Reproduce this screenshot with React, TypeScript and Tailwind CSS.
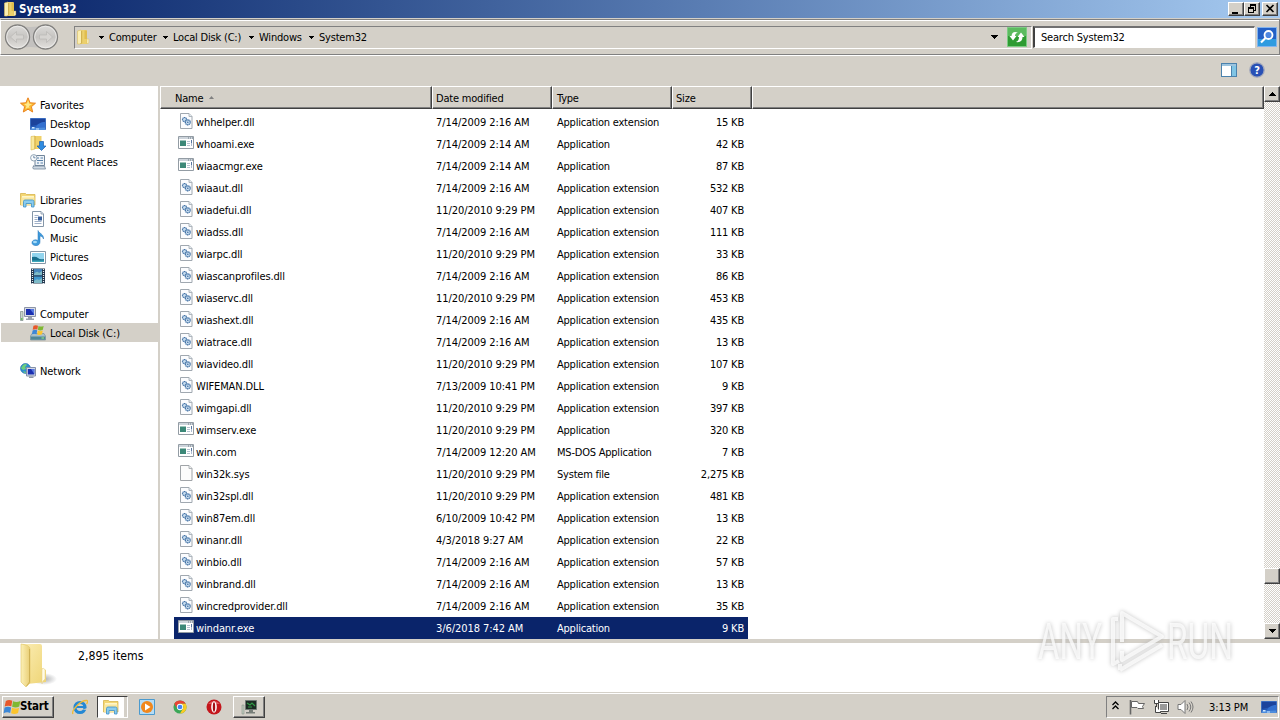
import type { ReactNode } from "react";

type IconProps = { size?: number; children: ReactNode };

const Icon = ({ size = 16, children }: IconProps) => (
  <svg width={size} height={size} viewBox="0 0 16 16" className="block shrink-0">
    {children}
  </svg>
);

const FolderIcon = () => (
  <Icon>
    <path d="M5.5 1h6v9l2 .5V14l-1.500 1H5l1-1.500z" fill="#ecd06c" />
    <path d="M2.500 2 6 1l1 1v11.500L5.500 15h-3z" fill="#fbeeb0" stroke="#dcc060" strokeWidth=".6" />
    <path d="M6.500 2v12l-1 1" fill="none" stroke="#c9a63f" strokeWidth=".8" />
    <path d="M9.500 1.500h2.500V10H9.500z" fill="#e0bd4d" />
    <path d="M12 10h1.800v4l-1.800.8z" fill="#fdf5cf" stroke="#d9b94c" strokeWidth=".4" />
  </Icon>
);

const LargeFolderIcon = () => (
  <svg width="44" height="46" viewBox="0 0 44 46" className="shrink-0">
    <defs>
      <linearGradient id="flap">
        <stop stopColor="#fcf0b6" />
        <stop offset="1" stopColor="#e9ce75" />
      </linearGradient>
      <linearGradient id="back" x2="1" y2="1">
        <stop stopColor="#fbedb4" />
        <stop offset="1" stopColor="#eed474" />
      </linearGradient>
      <radialGradient id="shade">
        <stop stopColor="#8b8d90" stopOpacity=".7" />
        <stop offset="1" stopColor="#8b8d90" stopOpacity="0" />
      </radialGradient>
    </defs>
    <ellipse cx="29" cy="36" rx="13" ry="6" fill="url(#shade)" />
    <path d="M7 1h18q2 0 2 2v22l4 2v12l-19 2z" fill="url(#back)" />
    <path d="M27 26q2-2 3 1v9q-3 2-3 5z" fill="#fffbe6" stroke="#e5cf86" strokeWidth=".5" />
    <path d="M6 1q9 1 9 5v34l-4 4-5-5z" fill="url(#flap)" stroke="#dfc467" strokeWidth=".6" />
    <path d="M14.500 6v33l-3 4" fill="none" stroke="#c9aa4d" strokeWidth=".8" />
  </svg>
);

const StarIcon = () => (
  <Icon>
    <path
      d="m8 .8 2.100 5 5.400.4-4.100 3.500 1.300 5.300L8 12.200 3.300 15l1.300-5.300L.5 6.200l5.400-.4z"
      fill="#fbb92f"
      stroke="#ea8420"
    />
    <path d="m8 3 1.300 3.700 3 .3L9 9l.5 2L8 10.500 5.500 12 6.500 9 4 7l3-.4z" fill="#ffe98c" />
  </Icon>
);

const DesktopIcon = () => (
  <Icon>
    <path d="M.5 2.500h15v11H.5z" fill="#2458b5" stroke="#3a6cc0" />
    <path d="M1 3h14v4L1 10z" fill="#1c439c" />
    <path d="M6 11c1-3 5-5 9-5v6z" fill="#3370d0" />
    <path d="M1 11.500h14V14H1z" fill="#4d8ddd" />
    <path d="M2 11h2.500v1.500H2zM6 12.500h3v1H6z" fill="#cfe8ff" />
  </Icon>
);

const DownloadsIcon = () => (
  <Icon>
    <path d="M1 1.500 5 1v13l-4 1z" fill="#f9e9a0" stroke="#d9b94c" strokeWidth=".6" />
    <path d="M5 1h6.500v13h-7z" fill="#f0d16a" />
    <path d="M5 1v13" stroke="#c79f35" strokeWidth=".7" />
    <path d="M9.500 6.500h4V11H16l-4.500 4.500L7 11h2.500z" fill="#2f8be0" stroke="#1c5fae" strokeWidth=".7" />
  </Icon>
);

const RecentIcon = () => (
  <Icon>
    <path d="M5 1.500h9.500v10H5z" fill="#eef3f8" stroke="#71859a" />
    <path d="M7 4h2M10.500 4h2.500M7 6.500h6M7 9h2M10.500 9h2.500" stroke="#5881aa" />
    <path d="M3 12h11.500l1 3H3.500q-1.500-1 0-3z" fill="#cfd9e3" stroke="#71859a" strokeWidth=".8" />
    <circle cx="3.800" cy="3.800" r="3.200" fill="#fafcfe" stroke="#91a3b4" />
    <path d="M3.800 1.800v2h1.700" fill="none" stroke="#4d6f92" strokeWidth=".8" />
  </Icon>
);

const LibrariesIcon = () => (
  <Icon>
    <path d="M.5 1.500h5l1 1h8.500V13H.5z" fill="#f4d775" stroke="#d2ad3f" strokeWidth=".7" />
    <path d="M2 4h12v3H2z" fill="#fff6c9" />
    <path d="M1.500 5.500h13L14 13H1z" fill="#f9e7a0" />
    <path
      d="M3.500 15V9.500Q3.500 8 5 8h7.500Q14 8 14 9.500V15h-2.500v-3.500H6V15z"
      fill="#8accef"
      stroke="#3d91c6"
      strokeWidth=".8"
    />
  </Icon>
);

const DocumentsIcon = () => (
  <Icon>
    <path d="M2.500.5H11l2.500 2.500v12.500h-11z" fill="#fff" stroke="#8596a8" />
    <path d="M11 .5V3h2.500" fill="#dfe7f0" stroke="#8596a8" strokeWidth=".8" />
    <path d="M4.500 4.500h4M4.500 6.500h3M4.500 8.500h3M4.500 10.500h7M4.500 12.500h7" stroke="#9fb0c8" />
    <path d="M8 5.500h4v4H8z" fill="#375f9d" />
  </Icon>
);

const MusicIcon = () => (
  <Icon>
    <path
      d="M8 .5c1 3 6 3.500 5.500 8.500-.6-2-2-3-3.500-3v6c0 5-8.500 4.500-8 .5.3-2.500 3.500-3.500 6-2z"
      fill="#3f9bdc"
      stroke="#2474b8"
      strokeWidth=".5"
    />
    <ellipse cx="5" cy="12" rx="2" ry="1.200" fill="#a6dbf8" />
  </Icon>
);

const PicturesIcon = () => (
  <Icon>
    <path d="M.5 2.500h15v12H.5z" fill="#fff" stroke="#8798a8" />
    <path d="M2 4h12v9H2z" fill="#92d4ee" />
    <path d="M2 8q4-1 6 1t6 1v3H2z" fill="#19708e" />
    <path d="M2 11.500h12V13H2z" fill="#3fa8bb" />
  </Icon>
);

const VideosIcon = () => (
  <Icon>
    <path d="M1 .5h14v15H1z" fill="#22364c" />
    <path d="M4 1h8v6.500H4z" fill="#4686bd" />
    <path d="M4 8.500h8V15H4z" fill="#3e97cf" />
    <path d="M4 6q3-4 5-1l3-2v4H4zM4 13q3-3 5-1l3-2v5H4z" fill="#7ebbc8" />
    <path d="M2.500 1v15M13.500 1v15" stroke="#e7edf3" strokeWidth="1.200" strokeDasharray="1 1" />
  </Icon>
);

const ComputerIcon = () => (
  <Icon>
    <path d="M.5 5.500H3v9H.5z" fill="#cbd6cc" stroke="#7c8d88" strokeWidth=".7" />
    <path d="M1 12h1.500v2H1z" fill="#6bc15f" />
    <path d="M4.500 1.500h11v9h-11z" fill="#d6dbe6" stroke="#8c94a6" />
    <path d="M6 3h8v6H6z" fill="#1a2fb0" />
    <path d="M10 3h4v6c-1-3-3-4-4-6z" fill="#5678e0" />
    <path d="M8 11h4v1.500H8zM6 12.500h8V14H6z" fill="#9aa1ad" />
  </Icon>
);

const WindowsFlag = () => (
  <>
    <path d="M2.200 1.800q2.500-1.300 5-.1L6.500 6Q4 5 1.300 6.200z" fill="#e8582a" />
    <path d="M7.800 2q2.600 1.300 5.700-.1l-.9 4.300Q10 7.500 7.100 6.300z" fill="#7fb832" />
    <path d="M1.200 6.900q2.600-1.200 5.100-.1l-.7 4.300q-2.600-1-5.100.2z" fill="#3c87d6" />
    <path d="M7 7.100q2.600 1.300 5.500-.1l-.8 4.200q-2.700 1.400-5.400.2z" fill="#fbc42c" />
  </>
);

const DiskIcon = () => (
  <Icon>
    <path d="M2 8.500h12l1.500 2.500v4H.5v-4z" fill="#a9bfc9" stroke="#6b8591" strokeWidth=".6" />
    <path d="M.8 11.500h14.400v3.200H.8z" fill="#4f8796" />
    <path d="M11.500 12.500H14v1h-2.500z" fill="#9df07c" />
    <g transform="translate(1.500 -.8) scale(.9)">
      <WindowsFlag />
    </g>
  </Icon>
);

const NetworkIcon = () => (
  <Icon>
    <circle cx="5.500" cy="5.500" r="5" fill="#2d8ed0" stroke="#2068a7" strokeWidth=".6" />
    <path d="M3 2q3-2 4 0L5 4l1 2-3 1-2-2zM3 8l3 1-1 1.500z" fill="#6dcf7c" />
    <path d="M6.500 4.500h9V13h-9z" fill="#d4dae8" stroke="#838fa8" />
    <path d="M7.800 6h6.500v5.500H7.800z" fill="#1a2fb0" />
    <path d="M11 6h3.300v5z" fill="#5678e0" />
    <path d="M9 13.500h4.500V15H9z" fill="#8e97a5" />
  </Icon>
);

const DllIcon = () => (
  <Icon>
    <path d="M2.500.5H11l3 3v12H2.500z" fill="#fbfcfe" stroke="#a0a8b0" />
    <path d="M11 .5v3h3" fill="#e4eaf0" stroke="#a0a8b0" strokeWidth=".8" />
    <g fill="#c9def0" stroke="#4272a6">
      <circle cx="6.500" cy="6.500" r="2" strokeWidth="1.200" strokeDasharray="1.200 .4" />
      <circle cx="9.800" cy="9.300" r="2.500" strokeWidth="1.300" strokeDasharray="1.300 .4" />
    </g>
    <circle cx="9.800" cy="9.300" r=".8" fill="#3c68a0" />
  </Icon>
);

const ExeIcon = () => (
  <Icon>
    <path d="M.5 1.500h15v12H.5z" fill="#fff" stroke="#939ca4" />
    <path d="M1 2h14v2H1z" fill="#cdd4db" />
    <path d="M10 3h1M12 3h1M14 3h1" stroke="#6a7884" />
    <path d="M2 5.500h6v5.500H2z" fill="#3c8878" />
    <path d="M9 6.500h3M9 8.500h3M9 10.500h3" stroke="#b4c2d0" />
    <path d="M13.500 5v3.500M13.500 9.500v1" stroke="#5877a0" />
  </Icon>
);

const SysIcon = () => (
  <Icon>
    <path d="M2.500.5H11l3 3v12H2.500z" fill="#fcfcfc" stroke="#a0a4a8" />
    <path d="M11 .5v3h3" fill="#eee" stroke="#a0a4a8" strokeWidth=".8" />
  </Icon>
);

const fileIcons = { dll: DllIcon, exe: ExeIcon, sys: SysIcon };

type FileRow = [string, string, string, string, keyof typeof fileIcons];

const EXT = "Application extension";

const files: FileRow[] = [
  ["whhelper.dll", "7/14/2009 2:16 AM", EXT, "15 KB", "dll"],
  ["whoami.exe", "7/14/2009 2:14 AM", "Application", "42 KB", "exe"],
  ["wiaacmgr.exe", "7/14/2009 2:14 AM", "Application", "87 KB", "exe"],
  ["wiaaut.dll", "7/14/2009 2:16 AM", EXT, "532 KB", "dll"],
  ["wiadefui.dll", "11/20/2010 9:29 PM", EXT, "407 KB", "dll"],
  ["wiadss.dll", "7/14/2009 2:16 AM", EXT, "111 KB", "dll"],
  ["wiarpc.dll", "11/20/2010 9:29 PM", EXT, "33 KB", "dll"],
  ["wiascanprofiles.dll", "7/14/2009 2:16 AM", EXT, "86 KB", "dll"],
  ["wiaservc.dll", "11/20/2010 9:29 PM", EXT, "453 KB", "dll"],
  ["wiashext.dll", "7/14/2009 2:16 AM", EXT, "435 KB", "dll"],
  ["wiatrace.dll", "7/14/2009 2:16 AM", EXT, "13 KB", "dll"],
  ["wiavideo.dll", "11/20/2010 9:29 PM", EXT, "107 KB", "dll"],
  ["WIFEMAN.DLL", "7/13/2009 10:41 PM", EXT, "9 KB", "dll"],
  ["wimgapi.dll", "11/20/2010 9:29 PM", EXT, "397 KB", "dll"],
  ["wimserv.exe", "11/20/2010 9:29 PM", "Application", "320 KB", "exe"],
  ["win.com", "7/14/2009 12:20 AM", "MS-DOS Application", "7 KB", "exe"],
  ["win32k.sys", "11/20/2010 9:29 PM", "System file", "2,275 KB", "sys"],
  ["win32spl.dll", "11/20/2010 9:29 PM", EXT, "481 KB", "dll"],
  ["win87em.dll", "6/10/2009 10:42 PM", EXT, "13 KB", "dll"],
  ["winanr.dll", "4/3/2018 9:27 AM", EXT, "22 KB", "dll"],
  ["winbio.dll", "7/14/2009 2:16 AM", EXT, "57 KB", "dll"],
  ["winbrand.dll", "7/14/2009 2:16 AM", EXT, "13 KB", "dll"],
  ["wincredprovider.dll", "7/14/2009 2:16 AM", EXT, "35 KB", "dll"],
  ["windanr.exe", "3/6/2018 7:42 AM", "Application", "9 KB", "exe"],
];

const navGroups = [
  {
    label: "Favorites",
    icon: <StarIcon />,
    items: [
      { label: "Desktop", icon: <DesktopIcon /> },
      { label: "Downloads", icon: <DownloadsIcon /> },
      { label: "Recent Places", icon: <RecentIcon /> },
    ],
  },
  {
    label: "Libraries",
    icon: <LibrariesIcon />,
    items: [
      { label: "Documents", icon: <DocumentsIcon /> },
      { label: "Music", icon: <MusicIcon /> },
      { label: "Pictures", icon: <PicturesIcon /> },
      { label: "Videos", icon: <VideosIcon /> },
    ],
  },
  {
    label: "Computer",
    icon: <ComputerIcon />,
    items: [{ label: "Local Disk (C:)", icon: <DiskIcon />, selected: true }],
  },
  { label: "Network", icon: <NetworkIcon />, items: [] },
];

const Caret = ({ className = "" }: { className?: string }) => (
  <svg width="7" height="4" viewBox="0 0 7 4" className={`shrink-0 ${className}`} shapeRendering="crispEdges">
    <path d="M0 0h7v1H6v1H5v1H4v1H3V3H2V2H1V1H0z" />
  </svg>
);

const CrumbCaret = () => (
  <svg width="5" height="3" viewBox="0 0 5 3" className="ml-2 shrink-0" shapeRendering="crispEdges">
    <path d="M0 0h5v1H4v1H3v1H2V2H1V1H0z" />
  </svg>
);

const RAISED =
  "border border-t-white border-l-white border-r-[#404040] border-b-[#404040] bg-[#d4d0c8] shadow-[inset_-1px_-1px_0_#808080]";

const TitleBar = () => (
  <div className="flex h-[18px] items-center bg-linear-to-r from-[#0a246a] to-[#a6caf0] px-0.5">
    <FolderIcon />
    <span className="mt-px ml-px text-[11.5px] font-bold text-white">System32</span>
    <div className="ml-auto flex">
      <button className={`flex h-[14px] w-4 justify-center ${RAISED}`}>
        <svg width="12" height="11" shapeRendering="crispEdges">
          <path d="M2 9h6v2H2z" />
        </svg>
      </button>
      <button className={`flex h-[14px] w-4 justify-center ${RAISED}`}>
        <svg width="12" height="11" shapeRendering="crispEdges" fill="none" stroke="#000">
          <path d="M4.500 5V2.500h5v5H8M4 1.500h6M2.500 5.500h5v4h-5zM2 4.500h6" />
        </svg>
      </button>
      <button className={`ml-0.5 flex h-[14px] w-4 justify-center ${RAISED}`}>
        <svg width="12" height="11" fill="none" stroke="#000" strokeWidth="1.600">
          <path d="m2.500 2 7 7M9.500 2l-7 7" />
        </svg>
      </button>
    </div>
  </div>
);

const NavButtons = () => (
  <svg width="60" height="30" viewBox="0 0 60 30" className="shrink-0">
    <defs>
      <linearGradient id="orb" x2="0" y2="1">
        <stop stopColor="#dddcda" />
        <stop offset=".5" stopColor="#c6c4c1" />
        <stop offset="1" stopColor="#e4e2df" />
      </linearGradient>
    </defs>
    <path d="M15 3q14 4 30 0v24q-16-4-30 0z" fill="#c3c1bf" />
    <g fill="url(#orb)" stroke="#82817f" strokeWidth="1.300">
      <circle cx="16.500" cy="15" r="12" />
      <circle cx="44.500" cy="15" r="12" />
    </g>
    <g fill="none" stroke="#f0efed" strokeWidth=".8">
      <circle cx="16.500" cy="15" r="10.800" />
      <circle cx="44.500" cy="15" r="10.800" />
    </g>
    <g fill="#d6d4d1" stroke="#b9b7b4" strokeWidth=".7">
      <path d="m9.500 15 6-5.500V13h7v4h-7v3.500z" />
      <path d="m51.500 15-6-5.500V13h-7v4h7v3.500z" />
    </g>
  </svg>
);

const crumbs = [
  { label: "Computer", width: "w-[64px]" },
  { label: "Local Disk (C:)", width: "w-[86px]" },
  { label: "Windows", width: "w-[60px]" },
  { label: "System32", width: "w-[60px]" },
];

const RefreshIcon = () => (
  <svg width="20" height="20" viewBox="0 0 20 20">
    <path d="M.5.5h19v19H.5z" fill="#2f9c33" stroke="#7ccc83" />
    <path d="M1 1h18v8H1z" fill="#5cbb5f" />
    <path d="M2.500 9 6 13.500 9.500 9H8q0-3 3-3.500Q5 3.500 4.500 9z" fill="#fff" />
    <path d="M17.500 10 14 5.500 10.500 10H12q0 4-3 5 6.500 1 6.500-5z" fill="#fff" />
  </svg>
);

const SearchIcon = () => (
  <svg width="20" height="20" viewBox="0 0 20 20" className="mx-0.5">
    <path d="M.5.5h19v19H.5z" fill="#2360c6" stroke="#83b4ee" />
    <path d="M1 12h18v7H1z" fill="#2f9be0" />
    <circle cx="11.500" cy="8" r="4" fill="#4d86e0" stroke="#fff" strokeWidth="1.800" />
    <path d="m8.500 11-4.500 4.500" stroke="#fff" strokeWidth="2.200" />
  </svg>
);

const AddressBar = () => (
  <div className="mt-px flex h-9 items-center border border-t-[#808080] border-r-[#808080] border-b-[#808080] border-l-white bg-[#d4d0c8] shadow-[inset_0_1px_0_#fff,0_1px_0_#fff]">
    <NavButtons />
    <div className="ml-[13px] flex h-[23px] min-w-0 flex-1 items-center border border-t-[#808080] border-r-white border-b-white border-l-[#808080]">
      <FolderIcon />
      {crumbs.map((c) => (
        <div key={c.label} className={`flex items-center ${c.width}`}>
          <CrumbCaret />
          <span className="ml-[5px] tracking-[-0.2px]">{c.label}</span>
        </div>
      ))}
      <Caret className="mr-[33px] ml-auto" />
    </div>
    <div className="-ml-[25px] flex items-center">
      <RefreshIcon />
      <div className="ml-1.5 flex h-[22px] w-[222px] items-center border-t-2 border-r border-b border-l-2 border-t-[#707070] border-r-white border-b-white border-l-[#404040] bg-white pl-1.5 tracking-[-0.2px]">
        Search System32
      </div>
      <SearchIcon />
    </div>
  </div>
);

const columns = [
  { label: "Name", width: "w-[272px]", pad: "pl-[14px]" },
  { label: "Date modified", width: "w-[120px]", pad: "pl-[3px]" },
  { label: "Type", width: "w-[120px]", pad: "pl-1" },
  { label: "Size", width: "w-[80px]", pad: "pl-[3px]" },
  { label: "", width: "flex-1", pad: "" },
];

const Sidebar = () => (
  <nav className="w-[158px] shrink-0 bg-white pt-[9px] tracking-[-0.08px]">
    {navGroups.map((g) => (
      <div key={g.label} className="mb-[19px]">
        <div className="flex h-[19px] items-center pl-5">
          {g.icon}
          <span className="mt-0.5 ml-1">{g.label}</span>
        </div>
        {g.items.map((item) => (
          <div
            key={item.label}
            className={`ml-px flex h-[19px] items-center pl-[29px] ${"selected" in item ? "bg-[#d4d0c8]" : ""}`}
          >
            {item.icon}
            <span className="mt-0.5 ml-1">{item.label}</span>
          </div>
        ))}
      </div>
    ))}
  </nav>
);

const FileList = () => (
  <div className="flex min-w-0 flex-1 flex-col bg-white">
    <div className="flex h-[23px] bg-[#d4d0c8]">
      {columns.map((c) => (
        <div
          key={c.label}
          className={`flex items-center border border-t-white border-r-[#404040] border-b-[#404040] border-l-white pt-0.5 shadow-[inset_-1px_-1px_0_#808080] ${c.width} ${c.pad}`}
        >
          <span className="tracking-[-0.2px]">{c.label}</span>
          {c.label === "Name" && (
            <svg width="5" height="3" className="mb-[3px] ml-1.5">
              <path d="M2.500 0 5 3H0z" fill="#808080" />
            </svg>
          )}
        </div>
      ))}
    </div>
    <div className="pt-0.5 pl-[14px]">
      {files.map(([name, date, type, size, kind]) => {
        const FileIcon = fileIcons[kind];
        const selected = name === "windanr.exe";
        return (
          <div
            key={name}
            className={`flex h-[22px] w-[574px] items-center ${selected ? "bg-[#0a246a] text-white" : ""}`}
          >
            <div className="flex w-[262px] items-center pl-1">
              <div className="mb-0.5">
                <FileIcon />
              </div>
              <span className="ml-0.5 tracking-[-0.12px]">{name}</span>
            </div>
            <span className="w-[120px] tracking-[-0.06px]">{date}</span>
            <span className="w-[120px] pl-px tracking-[-0.22px]">{type}</span>
            <span className="flex-1 pr-1 text-right tracking-[-0.2px]">{size}</span>
          </div>
        );
      })}
    </div>
  </div>
);

const ScrollBar = () => (
  <div className="flex w-4 shrink-0 flex-col bg-[repeating-conic-gradient(#d4d0c8_0_25%,#fff_0_50%)] bg-size-[2px_2px]">
    <div className={`flex h-4 items-center justify-center ${RAISED}`}>
      <Caret className="rotate-180" />
    </div>
    <div className={`mt-[466px] h-4 ${RAISED}`} />
    <div className={`mt-auto flex h-4 items-center justify-center ${RAISED}`}>
      <Caret />
    </div>
  </div>
);

const Watermark = () => (
  <svg
    width="216"
    height="76"
    viewBox="0 0 216 76"
    className="absolute top-[602px] left-[1030px] drop-shadow-[0_0_2px_#b0b0b0]"
  >
    <g
      fill="#fff"
      fillOpacity=".75"
      fontFamily="'Roboto', 'Liberation Sans', sans-serif"
      fontSize="50"
      style={{ fontStretch: "normal" }}
    >
      <text x="8" y="57" textLength="64" lengthAdjust="spacingAndGlyphs">
        ANY
      </text>
      <text x="137" y="57" textLength="66" lengthAdjust="spacingAndGlyphs">
        RUN
      </text>
    </g>
    <g fill="none" stroke="#fff" strokeOpacity=".75" strokeWidth="4" strokeLinejoin="round">
      <path d="M92 40V11l40 23.500L92 58v-9" />
      <path d="M88 17h-5v45l6-3M90 68l42-25M90 68v-6" />
    </g>
  </svg>
);

const IeIcon = () => (
  <Icon>
    <circle cx="8" cy="8.500" r="5" fill="none" stroke="#2488d4" strokeWidth="3.200" />
    <path d="M4 8h9" stroke="#2488d4" strokeWidth="2" />
    <path d="m10 10.500 6-1.500v2z" fill="#d4d0c8" />
    <path d="M1 15C-1 12 8 1 15 1.500c1.500.5 0 3-.5 3.500" fill="none" stroke="#f0bb37" strokeWidth="1.300" />
  </Icon>
);

const MediaIcon = () => (
  <Icon>
    <path d="M.5.5h15v15H.5z" fill="#b5dcf5" stroke="#4b9ace" />
    <circle cx="8" cy="8" r="6" fill="#f1871c" />
    <path d="m6 4.500 5.500 3.500L6 11.500z" fill="#fff" />
  </Icon>
);

const ChromeIcon = () => (
  <Icon size={14}>
    <circle cx="8" cy="8" r="7.500" fill="#3aa757" />
    <path d="M1.500 4.250A7.500 7.500 0 0 1 14.500 4.250H8A3.750 3.750 0 0 0 4.700 9.800z" fill="#ea4335" />
    <path d="M14.500 4.250A7.500 7.500 0 0 1 8 15.500l3.250-5.600A3.750 3.750 0 0 0 8 4.250z" fill="#fbcb22" />
    <circle cx="8" cy="8" r="3.600" fill="#fff" />
    <circle cx="8" cy="8" r="2.700" fill="#4285f4" />
  </Icon>
);

const OperaIcon = () => (
  <Icon>
    <circle cx="8" cy="8" r="7.500" fill="#c4161c" />
    <path d="M2 5q6-6 12 0Z" fill="#df5257" />
    <ellipse cx="8" cy="8" rx="2.800" ry="5.700" fill="#fff" />
    <ellipse cx="8" cy="8" rx="1.200" ry="4.700" fill="#a30d13" />
  </Icon>
);

const MonitorIcon = () => (
  <Icon>
    <path d="M1 6h2v9H1z" fill="#bfcabf" stroke="#7f8a7f" strokeWidth=".5" />
    <path d="M4.500 1.500h11v9h-11z" fill="#1c2a24" stroke="#6f7a75" />
    <path d="m6 4 3 2 2-2 3 3M7 8h4" fill="none" stroke="#2f9a45" strokeWidth="1.200" />
    <path d="M8 11h4v2H8zM5 13h9v1.500H5z" fill="#777e79" />
  </Icon>
);

const Taskbar = () => (
  <div className="flex h-[27px] items-center bg-[#d4d0c8] shadow-[inset_0_1px_0_#fff]">
    <button className={`ml-0.5 flex h-[22px] w-[52px] items-center ${RAISED}`}>
      <svg width="18" height="18" viewBox="0 0 14 13" className="shrink-0">
        <WindowsFlag />
      </svg>
      <span className="mt-px -ml-px text-[11.5px] font-bold tracking-[-0.2px]">Start</span>
    </button>
    <div className="ml-[18px]">
      <IeIcon />
    </div>
    <div className="ml-[9px] flex h-[22px] w-[31px] items-center border border-t-[#404040] border-r-white border-b-white border-l-[#404040] bg-white pl-[5px] shadow-[inset_-3px_0_0_#d4d0c8,inset_-4px_0_0_#fff]">
      <LibrariesIcon />
    </div>
    <div className="ml-[11px]">
      <MediaIcon />
    </div>
    <div className="ml-[18px]">
      <ChromeIcon />
    </div>
    <div className="ml-[19px]">
      <OperaIcon />
    </div>
    <div className={`ml-[11px] flex h-[22px] w-8 items-center justify-center ${RAISED}`}>
      <MonitorIcon />
    </div>
    <div className="mr-px ml-auto flex h-[22px] w-[173px] items-center border border-t-[#808080] border-r-white border-b-white border-l-[#808080]">
      <svg width="7" height="9" className="mb-[3px] ml-[5px]" fill="none" stroke="#000" strokeWidth="1.300">
        <path d="m.5 4 3-3 3 3M.5 8l3-3 3 3" />
      </svg>
      <svg width="16" height="16" className="ml-[10px]" fill="#fff" stroke="#666">
        <path d="M1.500 1v14.500" strokeWidth="1.600" />
        <path d="M2.500 2.500h6l1 2h6l-2 3 1 2H9l-1-1H2.500z" />
      </svg>
      <svg width="16" height="16" className="ml-2" fill="#fff" stroke="#444">
        <path d="M5.500 3.500h10v9h-10z" />
        <path d="M7 5h7v6H7z" fill="#999" stroke="none" />
        <path d="M8 14.500h6M2.500 7v6.500H8M1.500 1v3.500h4V1M3.500 4v4" />
      </svg>
      <svg width="17" height="16" className="ml-2" fill="#fff" stroke="#777">
        <path d="M1 5.500h3l4-4v13l-4-4H1z" />
        <path d="M10 5q2 3 0 6M12 3.500q3.500 4.500 0 9M14 2.500q4 5.500 0 11" fill="none" />
      </svg>
      <span className="mt-0.5 ml-[15px] tracking-[-0.1px]">3:13 PM</span>
      <div className="ml-auto pr-px">
        <DesktopIcon />
      </div>
    </div>
  </div>
);

export default function App() {
  return (
    <div className="relative flex h-[720px] w-[1280px] flex-col overflow-hidden bg-[#d4d0c8] font-['DejaVu_Sans_Condensed','DejaVu_Sans',sans-serif] text-[11px] leading-none whitespace-nowrap text-black [font-stretch:condensed]">
      <TitleBar />
      <AddressBar />
      <div className="flex h-[31px] items-center justify-end pr-[15px] pb-0.5">
        <svg width="16" height="14" shapeRendering="crispEdges">
          <path d="M.5.5h15v13H.5z" fill="#fff" stroke="#4b82ad" />
          <path d="M1 1h14v2H1z" fill="#9cc4df" />
          <path d="M10 3h5v10h-5z" fill="#80c5e5" />
          <path d="M10.500 3v10" stroke="#4b82ad" />
        </svg>
        <svg width="16" height="16" className="ml-3">
          <circle cx="8" cy="8" r="7.200" fill="#2850b5" stroke="#a2a8bb" strokeWidth="1.300" />
          <text x="8" y="12" textAnchor="middle" fontSize="11" fontWeight="bold" fill="#fff">
            ?
          </text>
        </svg>
      </div>
      <div className="flex h-[553px]">
        <Sidebar />
        <div className="w-0.5 shrink-0" />
        <FileList />
        <ScrollBar />
      </div>
      <div className="mt-1 flex h-[49px] bg-white pl-[15px]">
        <LargeFolderIcon />
        <span className="mt-[7px] ml-[19px] text-[12.2px]">2,895 items</span>
      </div>
      <div className="h-px" />
      <Taskbar />
      <Watermark />
    </div>
  );
}
